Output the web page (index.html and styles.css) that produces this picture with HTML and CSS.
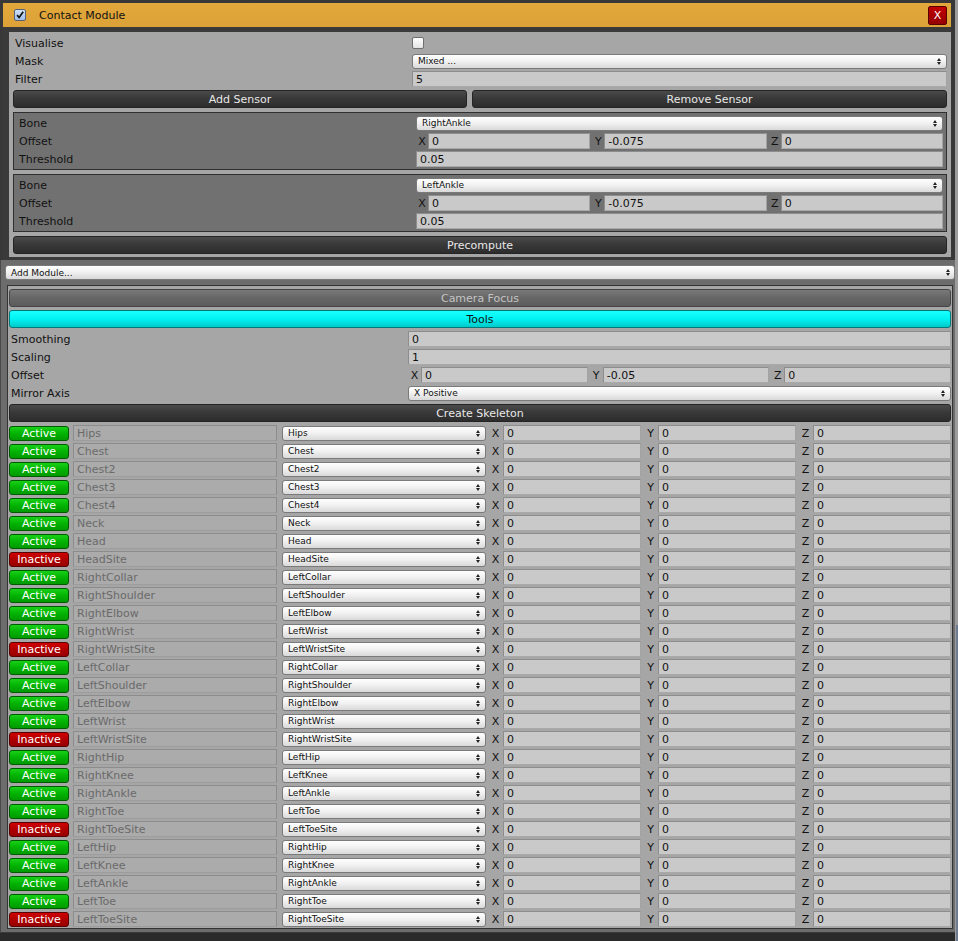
FILE: index.html
```html
<!DOCTYPE html>
<html>
<head>
<meta charset="utf-8">
<link rel="stylesheet" href="styles.css">
</head>
<body>
<div class="window">
  <div class="main">
    <div class="module">
      <div class="mod-header">
        <span class="check checked"><svg viewBox="0 0 12 12" width="12" height="12"><path d="M2.5 6.2 L5 9 L9.8 2.2" fill="none" stroke="#111" stroke-width="2"/></svg></span>
        <span class="mod-title">Contact Module</span>
        <span class="close">X</span>
      </div>
      <div class="mod-body">
        <div class="prop"><span class="lbl">Visualise</span><span class="val"><span class="check"></span></span></div>
        <div class="prop"><span class="lbl">Mask</span><span class="val"><span class="dropdown"><span>Mixed ...</span><i class="arr"></i></span></span></div>
        <div class="prop gap3"><span class="lbl">Filter</span><span class="val"><span class="field">5</span></span></div>
        <div class="btn-row">
          <span class="btn dark add">Add Sensor</span>
          <span class="btn dark grow">Remove Sensor</span>
        </div>
        <div class="sensor">
          <div class="prop"><span class="lbl">Bone</span><span class="val"><span class="dropdown"><span>RightAnkle</span><i class="arr"></i></span></span></div>
          <div class="prop"><span class="lbl">Offset</span><span class="val xyz s"><span class="grp"><span class="ax">X</span><span class="field">0</span></span><span class="grp"><span class="ax">Y</span><span class="field">-0.075</span></span><span class="grp"><span class="ax">Z</span><span class="field">0</span></span></span></div>
          <div class="prop last"><span class="lbl">Threshold</span><span class="val"><span class="field">0.05</span></span></div>
        </div>
        <div class="sensor">
          <div class="prop"><span class="lbl">Bone</span><span class="val"><span class="dropdown"><span>LeftAnkle</span><i class="arr"></i></span></span></div>
          <div class="prop"><span class="lbl">Offset</span><span class="val xyz s"><span class="grp"><span class="ax">X</span><span class="field">0</span></span><span class="grp"><span class="ax">Y</span><span class="field">-0.075</span></span><span class="grp"><span class="ax">Z</span><span class="field">0</span></span></span></div>
          <div class="prop last"><span class="lbl">Threshold</span><span class="val"><span class="field">0.05</span></span></div>
        </div>
        <div class="btn dark precompute">Precompute</div>
      </div>
    </div>

    <div class="lower">
      <div class="add-module"><span class="dropdown wide"><span>Add Module...</span><i class="arr"></i></span></div>

      <div class="panel">
        <div class="btn camera">Camera Focus</div>
        <div class="btn tools">Tools</div>
        <div class="prop"><span class="lbl">Smoothing</span><span class="val"><span class="field">0</span></span></div>
        <div class="prop"><span class="lbl">Scaling</span><span class="val"><span class="field">1</span></span></div>
        <div class="prop"><span class="lbl">Offset</span><span class="val xyz p"><span class="grp"><span class="ax">X</span><span class="field">0</span></span><span class="grp"><span class="ax">Y</span><span class="field">-0.05</span></span><span class="grp"><span class="ax">Z</span><span class="field">0</span></span></span></div>
        <div class="prop"><span class="lbl">Mirror Axis</span><span class="val"><span class="dropdown"><span>X Positive</span><i class="arr"></i></span></span></div>
        <div class="btn dark skel">Create Skeleton</div>

        <div class="bones">
          <div class="bone"><span class="state on">Active</span><span class="name">Hips</span><span class="dropdown"><span>Hips</span><i class="arr"></i></span><span class="xyz r"><span class="grp"><span class="ax">X</span><span class="field">0</span></span><span class="grp"><span class="ax">Y</span><span class="field">0</span></span><span class="grp"><span class="ax">Z</span><span class="field">0</span></span></span></div>
          <div class="bone"><span class="state on">Active</span><span class="name">Chest</span><span class="dropdown"><span>Chest</span><i class="arr"></i></span><span class="xyz r"><span class="grp"><span class="ax">X</span><span class="field">0</span></span><span class="grp"><span class="ax">Y</span><span class="field">0</span></span><span class="grp"><span class="ax">Z</span><span class="field">0</span></span></span></div>
          <div class="bone"><span class="state on">Active</span><span class="name">Chest2</span><span class="dropdown"><span>Chest2</span><i class="arr"></i></span><span class="xyz r"><span class="grp"><span class="ax">X</span><span class="field">0</span></span><span class="grp"><span class="ax">Y</span><span class="field">0</span></span><span class="grp"><span class="ax">Z</span><span class="field">0</span></span></span></div>
          <div class="bone"><span class="state on">Active</span><span class="name">Chest3</span><span class="dropdown"><span>Chest3</span><i class="arr"></i></span><span class="xyz r"><span class="grp"><span class="ax">X</span><span class="field">0</span></span><span class="grp"><span class="ax">Y</span><span class="field">0</span></span><span class="grp"><span class="ax">Z</span><span class="field">0</span></span></span></div>
          <div class="bone"><span class="state on">Active</span><span class="name">Chest4</span><span class="dropdown"><span>Chest4</span><i class="arr"></i></span><span class="xyz r"><span class="grp"><span class="ax">X</span><span class="field">0</span></span><span class="grp"><span class="ax">Y</span><span class="field">0</span></span><span class="grp"><span class="ax">Z</span><span class="field">0</span></span></span></div>
          <div class="bone"><span class="state on">Active</span><span class="name">Neck</span><span class="dropdown"><span>Neck</span><i class="arr"></i></span><span class="xyz r"><span class="grp"><span class="ax">X</span><span class="field">0</span></span><span class="grp"><span class="ax">Y</span><span class="field">0</span></span><span class="grp"><span class="ax">Z</span><span class="field">0</span></span></span></div>
          <div class="bone"><span class="state on">Active</span><span class="name">Head</span><span class="dropdown"><span>Head</span><i class="arr"></i></span><span class="xyz r"><span class="grp"><span class="ax">X</span><span class="field">0</span></span><span class="grp"><span class="ax">Y</span><span class="field">0</span></span><span class="grp"><span class="ax">Z</span><span class="field">0</span></span></span></div>
          <div class="bone"><span class="state off">Inactive</span><span class="name">HeadSite</span><span class="dropdown"><span>HeadSite</span><i class="arr"></i></span><span class="xyz r"><span class="grp"><span class="ax">X</span><span class="field">0</span></span><span class="grp"><span class="ax">Y</span><span class="field">0</span></span><span class="grp"><span class="ax">Z</span><span class="field">0</span></span></span></div>
          <div class="bone"><span class="state on">Active</span><span class="name">RightCollar</span><span class="dropdown"><span>LeftCollar</span><i class="arr"></i></span><span class="xyz r"><span class="grp"><span class="ax">X</span><span class="field">0</span></span><span class="grp"><span class="ax">Y</span><span class="field">0</span></span><span class="grp"><span class="ax">Z</span><span class="field">0</span></span></span></div>
          <div class="bone"><span class="state on">Active</span><span class="name">RightShoulder</span><span class="dropdown"><span>LeftShoulder</span><i class="arr"></i></span><span class="xyz r"><span class="grp"><span class="ax">X</span><span class="field">0</span></span><span class="grp"><span class="ax">Y</span><span class="field">0</span></span><span class="grp"><span class="ax">Z</span><span class="field">0</span></span></span></div>
          <div class="bone"><span class="state on">Active</span><span class="name">RightElbow</span><span class="dropdown"><span>LeftElbow</span><i class="arr"></i></span><span class="xyz r"><span class="grp"><span class="ax">X</span><span class="field">0</span></span><span class="grp"><span class="ax">Y</span><span class="field">0</span></span><span class="grp"><span class="ax">Z</span><span class="field">0</span></span></span></div>
          <div class="bone"><span class="state on">Active</span><span class="name">RightWrist</span><span class="dropdown"><span>LeftWrist</span><i class="arr"></i></span><span class="xyz r"><span class="grp"><span class="ax">X</span><span class="field">0</span></span><span class="grp"><span class="ax">Y</span><span class="field">0</span></span><span class="grp"><span class="ax">Z</span><span class="field">0</span></span></span></div>
          <div class="bone"><span class="state off">Inactive</span><span class="name">RightWristSite</span><span class="dropdown"><span>LeftWristSite</span><i class="arr"></i></span><span class="xyz r"><span class="grp"><span class="ax">X</span><span class="field">0</span></span><span class="grp"><span class="ax">Y</span><span class="field">0</span></span><span class="grp"><span class="ax">Z</span><span class="field">0</span></span></span></div>
          <div class="bone"><span class="state on">Active</span><span class="name">LeftCollar</span><span class="dropdown"><span>RightCollar</span><i class="arr"></i></span><span class="xyz r"><span class="grp"><span class="ax">X</span><span class="field">0</span></span><span class="grp"><span class="ax">Y</span><span class="field">0</span></span><span class="grp"><span class="ax">Z</span><span class="field">0</span></span></span></div>
          <div class="bone"><span class="state on">Active</span><span class="name">LeftShoulder</span><span class="dropdown"><span>RightShoulder</span><i class="arr"></i></span><span class="xyz r"><span class="grp"><span class="ax">X</span><span class="field">0</span></span><span class="grp"><span class="ax">Y</span><span class="field">0</span></span><span class="grp"><span class="ax">Z</span><span class="field">0</span></span></span></div>
          <div class="bone"><span class="state on">Active</span><span class="name">LeftElbow</span><span class="dropdown"><span>RightElbow</span><i class="arr"></i></span><span class="xyz r"><span class="grp"><span class="ax">X</span><span class="field">0</span></span><span class="grp"><span class="ax">Y</span><span class="field">0</span></span><span class="grp"><span class="ax">Z</span><span class="field">0</span></span></span></div>
          <div class="bone"><span class="state on">Active</span><span class="name">LeftWrist</span><span class="dropdown"><span>RightWrist</span><i class="arr"></i></span><span class="xyz r"><span class="grp"><span class="ax">X</span><span class="field">0</span></span><span class="grp"><span class="ax">Y</span><span class="field">0</span></span><span class="grp"><span class="ax">Z</span><span class="field">0</span></span></span></div>
          <div class="bone"><span class="state off">Inactive</span><span class="name">LeftWristSite</span><span class="dropdown"><span>RightWristSite</span><i class="arr"></i></span><span class="xyz r"><span class="grp"><span class="ax">X</span><span class="field">0</span></span><span class="grp"><span class="ax">Y</span><span class="field">0</span></span><span class="grp"><span class="ax">Z</span><span class="field">0</span></span></span></div>
          <div class="bone"><span class="state on">Active</span><span class="name">RightHip</span><span class="dropdown"><span>LeftHip</span><i class="arr"></i></span><span class="xyz r"><span class="grp"><span class="ax">X</span><span class="field">0</span></span><span class="grp"><span class="ax">Y</span><span class="field">0</span></span><span class="grp"><span class="ax">Z</span><span class="field">0</span></span></span></div>
          <div class="bone"><span class="state on">Active</span><span class="name">RightKnee</span><span class="dropdown"><span>LeftKnee</span><i class="arr"></i></span><span class="xyz r"><span class="grp"><span class="ax">X</span><span class="field">0</span></span><span class="grp"><span class="ax">Y</span><span class="field">0</span></span><span class="grp"><span class="ax">Z</span><span class="field">0</span></span></span></div>
          <div class="bone"><span class="state on">Active</span><span class="name">RightAnkle</span><span class="dropdown"><span>LeftAnkle</span><i class="arr"></i></span><span class="xyz r"><span class="grp"><span class="ax">X</span><span class="field">0</span></span><span class="grp"><span class="ax">Y</span><span class="field">0</span></span><span class="grp"><span class="ax">Z</span><span class="field">0</span></span></span></div>
          <div class="bone"><span class="state on">Active</span><span class="name">RightToe</span><span class="dropdown"><span>LeftToe</span><i class="arr"></i></span><span class="xyz r"><span class="grp"><span class="ax">X</span><span class="field">0</span></span><span class="grp"><span class="ax">Y</span><span class="field">0</span></span><span class="grp"><span class="ax">Z</span><span class="field">0</span></span></span></div>
          <div class="bone"><span class="state off">Inactive</span><span class="name">RightToeSite</span><span class="dropdown"><span>LeftToeSite</span><i class="arr"></i></span><span class="xyz r"><span class="grp"><span class="ax">X</span><span class="field">0</span></span><span class="grp"><span class="ax">Y</span><span class="field">0</span></span><span class="grp"><span class="ax">Z</span><span class="field">0</span></span></span></div>
          <div class="bone"><span class="state on">Active</span><span class="name">LeftHip</span><span class="dropdown"><span>RightHip</span><i class="arr"></i></span><span class="xyz r"><span class="grp"><span class="ax">X</span><span class="field">0</span></span><span class="grp"><span class="ax">Y</span><span class="field">0</span></span><span class="grp"><span class="ax">Z</span><span class="field">0</span></span></span></div>
          <div class="bone"><span class="state on">Active</span><span class="name">LeftKnee</span><span class="dropdown"><span>RightKnee</span><i class="arr"></i></span><span class="xyz r"><span class="grp"><span class="ax">X</span><span class="field">0</span></span><span class="grp"><span class="ax">Y</span><span class="field">0</span></span><span class="grp"><span class="ax">Z</span><span class="field">0</span></span></span></div>
          <div class="bone"><span class="state on">Active</span><span class="name">LeftAnkle</span><span class="dropdown"><span>RightAnkle</span><i class="arr"></i></span><span class="xyz r"><span class="grp"><span class="ax">X</span><span class="field">0</span></span><span class="grp"><span class="ax">Y</span><span class="field">0</span></span><span class="grp"><span class="ax">Z</span><span class="field">0</span></span></span></div>
          <div class="bone"><span class="state on">Active</span><span class="name">LeftToe</span><span class="dropdown"><span>RightToe</span><i class="arr"></i></span><span class="xyz r"><span class="grp"><span class="ax">X</span><span class="field">0</span></span><span class="grp"><span class="ax">Y</span><span class="field">0</span></span><span class="grp"><span class="ax">Z</span><span class="field">0</span></span></span></div>
          <div class="bone"><span class="state off">Inactive</span><span class="name">LeftToeSite</span><span class="dropdown"><span>RightToeSite</span><i class="arr"></i></span><span class="xyz r"><span class="grp"><span class="ax">X</span><span class="field">0</span></span><span class="grp"><span class="ax">Y</span><span class="field">0</span></span><span class="grp"><span class="ax">Z</span><span class="field">0</span></span></span></div>
        </div>
      </div>
    </div>
  </div>
  <div class="scroll"><div class="thumb"></div></div>
</div>
</body>
</html>
```

FILE: styles.css
```css
* { box-sizing: border-box; }
html, body { margin: 0; padding: 0; }
body {
  width: 958px;
  height: 941px;
  overflow: hidden;
  background: #2a2a2a;
  font-family: "DejaVu Sans", "Liberation Sans", sans-serif;
  font-size: 11px;
  color: #111;
}
.window { display: flex; height: 941px; }
.main { width: 955px; display: flex; flex-direction: column; background: linear-gradient(#383838 260px, #2a2a2a 260px); }
.scroll { width: 3px; background: #9c9c9c; display: flex; flex-direction: column; padding-top: 625px; }
.thumb { flex: 1; background: #6c7a92; margin-left: 1px; }

/* Contact module */
.module {
  margin: 3px 4px 0 3px;
  background: #3a3a3a;
  padding-bottom: 3px;
}
.mod-header {
  height: 24px;
  background: linear-gradient(#e2a83c, #dca237);
  display: flex;
  align-items: center;
  padding: 0 4px 0 11px;
}
.mod-title { margin-left: 13px; flex: 1; font-size: 11px; color: #111; }
.close {
  width: 19px; height: 19px;
  background: linear-gradient(#c00000, #950000);
  border: 1px solid #5a0000;
  border-radius: 2px;
  color: #fff;
  display: flex; align-items: center; justify-content: center;
  font-size: 11px;
}
.check {
  width: 12px; height: 12px;
  border: 1px solid #6f6f6f;
  border-radius: 2px;
  background: linear-gradient(#ffffff, #e4e4e4);
  display: inline-flex; align-items: center; justify-content: center;
}
.check.checked { background: linear-gradient(#cfe0f6, #9fbde6); border-color: #55627a; }
.check svg { display: block; }

.mod-body {
  margin: 5px 0 0 6px;
  background: #a6a6a6;
  padding: 3px 4px 3px 4px;
  display: flex;
  flex-direction: column;
}
.prop { display: flex; align-items: center; height: 16px; margin-bottom: 2px; }
.prop.gap3 { margin-bottom: 3px; }
.prop.last { margin-bottom: 0; }
.lbl { width: 399px; padding-left: 2px; flex: none; white-space: nowrap; }
.val { flex: 1; display: flex; align-items: center; height: 16px; }

.field {
  flex: 1;
  height: 16px;
  background: #c9c9c9;
  border: 1px solid #8d8d8d;
  border-bottom-color: #a9a9a9;
  border-right-color: #a3a3a3;
  padding-left: 3px;
  line-height: 15px;
  font-size: 11px;
  color: #111;
  white-space: nowrap;
  overflow: hidden;
}
.dropdown {
  flex: 1;
  height: 15px;
  display: flex;
  align-items: center;
  justify-content: space-between;
  background: linear-gradient(#ffffff, #f2f2f2 45%, #d9d9d9);
  border: 1px solid #7a7a7a;
  border-radius: 3px;
  padding: 0 5px 0 5px;
  font-size: 9px;
  color: #111;
  white-space: nowrap;
}
.arr { display: flex; flex-direction: column; gap: 1px; }
.arr::before, .arr::after {
  content: "";
  width: 0; height: 0;
  border-left: 2px solid transparent;
  border-right: 2px solid transparent;
}
.arr::before { border-bottom: 3px solid #222; }
.arr::after { border-top: 3px solid #222; }

.btn {
  height: 18px;
  display: flex; align-items: center; justify-content: center;
  border-radius: 3px;
  font-size: 11px;
  white-space: nowrap;
}
.btn.dark {
  background: linear-gradient(#4a4a4a, #383838 50%, #2d2d2d);
  border: 1px solid #242424;
  color: #e8e8e8;
}
.btn-row { display: flex; gap: 5px; }
.btn.add { width: 454px; }
.btn.grow { flex: 1; }

.sensor {
  margin-top: 4px;
  background: #717171;
  border: 1px solid #303030;
  padding: 2px 3px;
}
.precompute { margin-top: 4px; }

.xyz { display: flex; gap: 2px; }
.grp { flex: 1; display: flex; align-items: center; height: 16px; }
.ax { text-align: center; flex: none; }
.xyz.s .ax { width: 12px; }
.xyz.p .ax { width: 13px; }
.xyz.r .ax { width: 15px; }

/* lower area */
.lower {
  background: #6c6c6c;
  border-left: 1px solid #4a4a4a;
  border-bottom: 1px solid #3a3a3a;
  padding: 5px 0 3px 0;
  display: flex;
  flex-direction: column;
}
.add-module { margin: 0 0 0 4px; height: 15px; display: flex; }
.dropdown.wide { height: 15px; padding-left: 5px; padding-right: 4px; }

.panel {
  margin: 5px 2px 0 6px;
  border: 1px solid #333;
  background: #a6a6a6;
  padding: 3px 1px 1px 1px;
  display: flex;
  flex-direction: column;
}
.btn.camera {
  background: linear-gradient(#7a7a7a, #666 50%, #5c5c5c);
  border: 1px solid #444;
  color: #c4c4c4;
  margin-bottom: 3px;
}
.btn.tools {
  background: linear-gradient(#19ffff, #00f2f2 50%, #00c9c9);
  border: 1px solid #007a7a;
  color: #111;
  margin-bottom: 3px;
}
.btn.skel { margin-top: 1px; margin-bottom: 3px; }

.bones { display: flex; flex-direction: column; gap: 2px; }
.bone { display: flex; align-items: center; height: 16px; }
.state {
  width: 60px; height: 15px;
  border-radius: 3px;
  display: flex; align-items: center; justify-content: center;
  color: #fff;
  font-size: 11px;
  flex: none;
}
.state.on { background: linear-gradient(#18d018, #03b303 50%, #009a00); border: 1px solid #005a00; }
.state.off { background: linear-gradient(#d00000, #b00000 50%, #960000); border: 1px solid #5a0000; }
.name {
  width: 204px; height: 16px;
  margin-left: 4px;
  flex: none;
  background: #ababab;
  border: 1px solid #8c8c8c;
  border-bottom-color: #9d9d9d;
  color: #6a6a6a;
  padding-left: 3px;
  line-height: 15px;
  white-space: nowrap;
}
.bone .dropdown { flex: none; width: 204px; margin-left: 5px; }
.bone .xyz { flex: 1; margin-left: 2px; }
```
